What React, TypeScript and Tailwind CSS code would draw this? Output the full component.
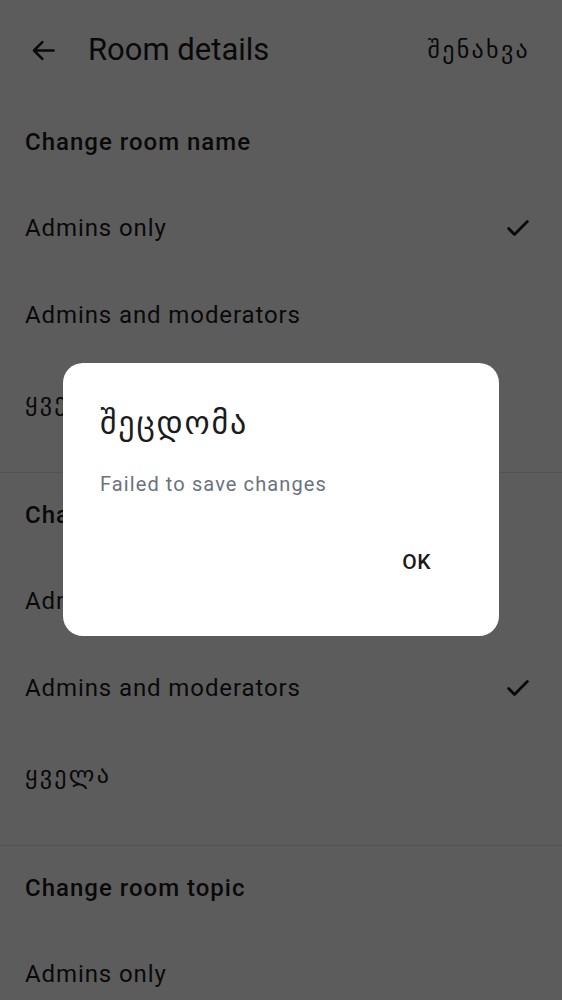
import React from "react";

const FONT = { fontFamily: "Roboto, 'Noto Sans', 'DejaVu Sans', sans-serif" };

function Check() {
  return (
    <svg width="28" height="28" viewBox="0 0 24 24" fill="none" stroke="currentColor" strokeWidth="2.4" strokeLinecap="round" strokeLinejoin="round">
      <path d="M4 12.5l5 5L20 6.5" />
    </svg>
  );
}

function Row({ label, checked, geo }: { label: string; checked?: boolean; geo?: boolean }) {
  return (
    <div className="h-[87px] flex items-center justify-between pl-[25px] pr-[30px]">
      <span className={geo ? "text-[24px] tracking-[2.3px] text-[#1b1b1d]" : "text-[24px] tracking-[0.9px] text-[#1b1b1d]"}>{label}</span>
      {checked && <span className="text-[#1b1b1d]"><Check /></span>}
    </div>
  );
}

function Section({ title, checkedIndex, divider }: { title: string; checkedIndex: number; divider?: boolean }) {
  const items = ["Admins only", "Admins and moderators", "ყველა"];
  return (
    <div className={divider ? "border-t border-[#e4e4e4]" : ""}>
      <div className="h-[84px] flex items-center pl-[25px]">
        <span className="text-[24px] font-medium tracking-[1px] text-[#1b1b1d]">{title}</span>
      </div>
      {items.map((it, i) => (
        <Row key={it} label={it} checked={i === checkedIndex} geo={i === 2} />
      ))}
      <div className="h-[27px]" />
    </div>
  );
}

export default function App() {
  return (
    <div style={FONT} className="relative w-[562px] h-[1000px] overflow-hidden bg-white">
      <div className="h-[100px] flex items-center pl-[30px] pr-[32px]">
        <svg width="27" height="27" viewBox="0 0 24 24" fill="none" stroke="#1b1b1d" strokeWidth="2.2" strokeLinecap="round" strokeLinejoin="round">
          <path d="M21 12H3.5M11 4.5L3.5 12l7.5 7.5" />
        </svg>
        <span className="ml-[31px] text-[31px] text-[#1b1b1d]">Room details</span>
        <span className="ml-auto text-[24px] tracking-[2.3px] text-[#1b1b1d]">შენახვა</span>
      </div>
      <Section title="Change room name" checkedIndex={0} />
      <Section title="Change room avatar" checkedIndex={1} divider />
      <Section title="Change room topic" checkedIndex={1} divider />

      <div className="absolute inset-0 bg-black/[0.64]" />

      <div className="absolute left-[63px] top-[363px] w-[436px] h-[273px] bg-white rounded-[20px] pl-[37px] pr-[68px] pt-[38px] flex flex-col">
        <div className="text-[32px] leading-[44px] tracking-[1.8px] text-[#1b1b1d]">შეცდომა</div>
        <div className="mt-[25px] text-[20px] leading-[28px] tracking-[1.1px] text-[#6b7280]">Failed to save changes</div>
        <div className="mt-[49px] flex justify-end">
          <span className="text-[21px] font-medium tracking-[0.5px] text-[#1b1b1d]">OK</span>
        </div>
      </div>
    </div>
  );
}
